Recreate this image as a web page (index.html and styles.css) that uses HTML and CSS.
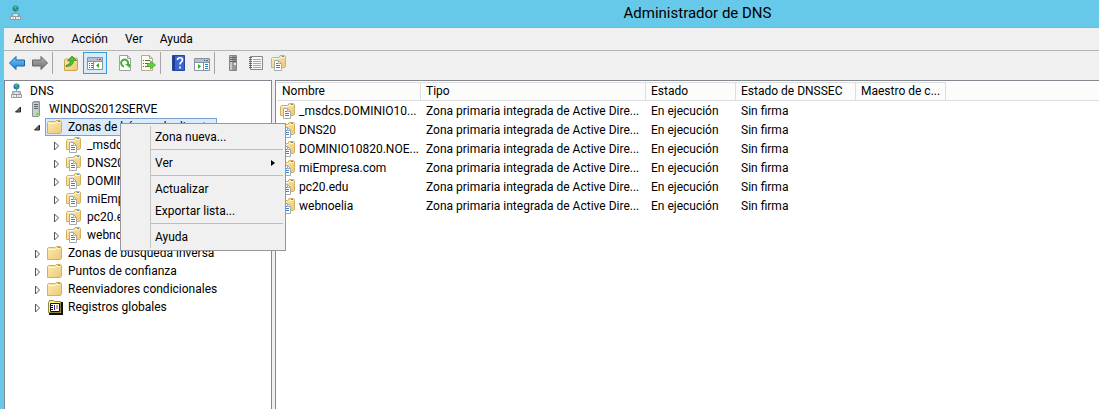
FILE: index.html
```
<!DOCTYPE html>
<html lang="es">
<head>
<meta charset="utf-8">
<title>Administrador de DNS</title>
<link rel="stylesheet" href="styles.css">
</head>
<body>
<svg class="sprite" aria-hidden="true">
  <defs>
    <linearGradient id="gold" x1="0" y1="0" x2="1" y2="1"><stop offset="0" stop-color="#fdecb4"/><stop offset="1" stop-color="#ecc873"/></linearGradient>
    <linearGradient id="blue" x1="0" y1="0" x2="0" y2="1"><stop offset="0" stop-color="#7cc8fa"/><stop offset="1" stop-color="#1580d8"/></linearGradient>
    <linearGradient id="gray" x1="0" y1="0" x2="0" y2="1"><stop offset="0" stop-color="#b5b5b5"/><stop offset="1" stop-color="#6d6d6d"/></linearGradient>
  </defs>
  <symbol id="dns" viewBox="0 0 16 16">
    <path d="M7.500 5v4M3.500 11V8.500h8V11" fill="none" stroke="#9aa0a5"/>
    <circle cx="7.500" cy="3.500" r="3" fill="#2476b8"/>
    <path d="M5.500 2l2-1.500 2 1-1.500 2-2 .5zM7 4.500l2.500-.5-1 2z" fill="#4bbb5c"/>
    <path d="M5 8.500h5v3H5zM2.500 11.500h5v3h-5zM7.500 11.500h5v3h-5z" fill="#f7f7f7" stroke="#959a9f"/>
    <path d="M6.500 10h2M4 13h2M9 13h2" stroke="#b9bdc0"/>
  </symbol>
  <symbol id="server" viewBox="0 0 16 16">
    <path d="M4.500 1.500l1-1h6v14l-1 1h-6z" fill="#a9b0b4" stroke="#8d9498"/>
    <path d="M5 2h5.500v13H5z" fill="#c9ced0"/>
    <path d="M6 3.500h4M6 5.500h4M6 7.500h4" stroke="#596267"/>
    <path d="M8 12h2.500v2H8z" fill="#78e01e"/>
  </symbol>
  <symbol id="folder" viewBox="0 0 16 16">
    <path d="M.5 3.500l1-1H8l1-1h4.500l1 1v11l-1 1h-13z" fill="url(#gold)" stroke="#d5b05f"/>
    <path d="M1.500 4.500h7l1-1h4" fill="none" stroke="#fff7d6"/>
    <path d="M11 2.500h2" stroke="#4a91c4"/>
  </symbol>
  <symbol id="zone" viewBox="0 0 16 16">
    <path d="M.5 3.500l1-1H8l1-2h4.500l1 1v10l-1 1h-13z" fill="url(#gold)" stroke="#d5b05f"/>
    <path d="M1.500 3.500h7l1-1h4" fill="none" stroke="#fff7d6"/>
    <path d="M11 1.500h2" stroke="#4a91c4"/>
    <path d="M3.500 5.500h4l3 3v7h-7z" fill="#fff" stroke="#a7aaad"/>
    <path d="M7.500 5.500v3h3" fill="none" stroke="#a7aaad"/>
    <path d="M5 8.500h2M5 10.500h4M5 12.500h4" stroke="#3c83c6"/>
  </symbol>
  <symbol id="log" viewBox="0 0 16 16">
    <path d="M1.500 3.500l1-2h4l1 1h6v11h-12z" fill="#fff36b" stroke="#8c883c"/>
    <path d="M15 3v12H2" fill="none" stroke="#111" stroke-width="2"/>
    <path d="M3.500 4.500h9v8h-9z" fill="#fff" stroke="#111"/>
    <path d="M4 6.500h2M4 8.500h2M4 10.500h2" stroke="#111"/>
    <path d="M7.500 6v5" stroke="#2430c8"/><path d="M10 6v4" stroke="#dd2020"/>
  </symbol>
  <symbol id="open" viewBox="0 0 16 16"><path d="M10.500 6v5H5.500z" fill="#666" stroke="#262626"/></symbol>
  <symbol id="closed" viewBox="0 0 16 16"><path d="M6.500 5v8l4-4z" fill="#fff" stroke="#555"/></symbol>
  <symbol id="back" viewBox="0 0 16 16"><path d="M.5 8L7 1.500V5h8.500v6H7v3.500z" fill="url(#blue)" stroke="#1d659f"/></symbol>
  <symbol id="forward" viewBox="0 0 16 16"><path d="M15.500 8L9 1.500V5H.5v6H9v3.500z" fill="url(#gray)" stroke="#666"/></symbol>
  <symbol id="up" viewBox="0 0 16 16">
    <path d="M1.500 5l1-1h5l1-1h5l1 1v10l-1 1.500h-12z" fill="url(#gold)" stroke="#cda54c"/>
    <path d="M3 10.500c3-1 4-2 4.500-4.500H4.500L9 1l4.500 4.500h-3c0 3-2 6-7.500 6z" fill="#52be2e" stroke="#278319" stroke-width=".7"/>
  </symbol>
  <symbol id="console" viewBox="0 0 16 16">
    <path d="M.5 2.500h15v12H.5z" fill="#fff" stroke="#8593a3"/><path d="M1 3h14v3H1z" fill="#b5c0cd"/>
    <path d="M1 6.500h14M6.500 7v7" stroke="#8593a3"/><path d="M10 4.500h1M12 4.500h2" stroke="#4d6780"/>
    <path d="M2 8.500h1M4 8.500h2M2 10.500h1M4 10.500h2M2 12.500h1M4 12.500h2" stroke="#2b7ac0"/>
    <path d="M12 8v5l-3-2.500z" fill="#35ad25"/>
  </symbol>
  <symbol id="refresh" viewBox="0 0 16 16">
    <path d="M2.500.5h8l3 3v12h-11z" fill="#fff" stroke="#a0a0a0"/><path d="M10.500.5v3h3" fill="none" stroke="#a0a0a0"/>
    <path d="M7 11.500A3.500 3.500 0 1 1 11 9" fill="none" stroke="#3cb22b" stroke-width="2"/><path d="M8 9h5v4z" fill="#3cb22b"/>
  </symbol>
  <symbol id="export" viewBox="0 0 16 16">
    <path d="M1.500.5h8l3 3v12h-11z" fill="#fffbe8" stroke="#b3ad93"/><path d="M9.500.5v3h3" fill="none" stroke="#b3ad93"/>
    <path d="M3 5.500h1M5 5.500h5M3 8.500h1M5 8.500h4M3 11.500h1M5 11.500h4" stroke="#555d78"/>
    <path d="M7.500 8.500h3V6l5 4-5 4v-2.500h-3z" fill="#5ed137" stroke="#39a51f" stroke-width=".7"/>
  </symbol>
  <symbol id="help" viewBox="0 0 16 16">
    <path d="M1.500.5h12v15h-12z" fill="#3a66d0" stroke="#24479c"/><path d="M3 1v14" stroke="#1e3c91" stroke-width="2"/>
    <path d="M6.500 5c0-3 5-3 5 0 0 2-2.500 2-2.500 4.500M9 11.500v2" fill="none" stroke="#fff" stroke-width="1.700"/>
  </symbol>
  <symbol id="action" viewBox="0 0 16 16">
    <path d="M.5 3.500h15v12H.5z" fill="#fff" stroke="#8593a3"/><path d="M1 4h14v3H1z" fill="#b5c0cd"/>
    <path d="M1 7.500h14M9.500 8v7" stroke="#8593a3"/><path d="M10 5.500h1M12 5.500h2" stroke="#4d6780"/>
    <path d="M11 9.500h3M11 11.500h3M11 13.500h3" stroke="#2b7ac0"/><path d="M4 9v5l3-2.500z" fill="#35ad25"/>
  </symbol>
  <symbol id="tower" viewBox="0 0 16 16">
    <path d="M4.500.5h7v15h-7z" fill="#999" stroke="#858585"/><path d="M5 1h2v14H5z" fill="#c7c7c7"/>
    <path d="M5 2.500h6M5 4.500h6M5 6.500h6" stroke="#626262"/><path d="M9 8h2v2H9z" fill="#eee"/>
  </symbol>
  <symbol id="book" viewBox="0 0 16 16">
    <path d="M2.500 1.500h12v13h-12z" fill="#f7f7f7" stroke="#888"/><path d="M5 4.500h8M5 6.500h8M5 8.500h8M5 10.500h8M5 12.500h8" stroke="#aaa"/>
    <path d="M1 2.500h3M1 4.500h3M1 6.500h3M1 8.500h3M1 10.500h3M1 12.500h3" stroke="#666"/>
  </symbol>
</svg>

<div class="window">
  <header class="titlebar">
    <svg class="icon"><use href="#dns"/></svg>
    <h1 class="title">Administrador de DNS</h1>
  </header>
  <nav class="menubar">
    <button>Archivo</button><button>Acción</button><button>Ver</button><button>Ayuda</button>
  </nav>
  <div class="toolbar" role="toolbar">
    <button aria-label="Atrás"><svg class="icon"><use href="#back"/></svg></button>
    <button aria-label="Adelante"><svg class="icon"><use href="#forward"/></svg></button>
    <span class="divider"></span>
    <button class="first" aria-label="Subir"><svg class="icon"><use href="#up"/></svg></button>
    <button class="active" aria-label="Árbol de consola"><svg class="icon"><use href="#console"/></svg></button>
    <button class="first" aria-label="Actualizar"><svg class="icon"><use href="#refresh"/></svg></button>
    <button aria-label="Exportar lista"><svg class="icon"><use href="#export"/></svg></button>
    <span class="divider"></span>
    <button class="first" aria-label="Ayuda"><svg class="icon"><use href="#help"/></svg></button>
    <button aria-label="Panel de acciones"><svg class="icon"><use href="#action"/></svg></button>
    <span class="divider"></span>
    <button class="first" aria-label="Servidor"><svg class="icon"><use href="#tower"/></svg></button>
    <button aria-label="Registros"><svg class="icon"><use href="#book"/></svg></button>
    <button aria-label="Zona"><svg class="icon"><use href="#zone"/></svg></button>
  </div>
  <main class="panes">
    <section class="tree-pane">
      <ul class="tree">
        <li><div class="node"><span class="label"><svg class="icon"><use href="#dns"/></svg>DNS</span></div>
          <ul class="servers">
            <li><div class="node"><svg class="icon"><use href="#open"/></svg><span class="label"><svg class="icon"><use href="#server"/></svg>WINDOS2012SERVE</span></div>
              <ul>
                <li><div class="node"><svg class="icon"><use href="#open"/></svg><span class="label selected"><svg class="icon"><use href="#folder"/></svg>Zonas de búsqueda directa</span></div>
                  <ul>
                    <li><div class="node"><svg class="icon"><use href="#closed"/></svg><span class="label"><svg class="icon"><use href="#zone"/></svg>_msdcs</span></div></li>
                    <li><div class="node"><svg class="icon"><use href="#closed"/></svg><span class="label"><svg class="icon"><use href="#zone"/></svg>DNS20</span></div></li>
                    <li><div class="node"><svg class="icon"><use href="#closed"/></svg><span class="label"><svg class="icon"><use href="#zone"/></svg>DOMINIO</span></div></li>
                    <li><div class="node"><svg class="icon"><use href="#closed"/></svg><span class="label"><svg class="icon"><use href="#zone"/></svg>miEmpresa</span></div></li>
                    <li><div class="node"><svg class="icon"><use href="#closed"/></svg><span class="label"><svg class="icon"><use href="#zone"/></svg>pc20.edu</span></div></li>
                    <li><div class="node"><svg class="icon"><use href="#closed"/></svg><span class="label"><svg class="icon"><use href="#zone"/></svg>webnoelia</span></div></li>
                  </ul>
                </li>
                <li><div class="node"><svg class="icon"><use href="#closed"/></svg><span class="label"><svg class="icon"><use href="#folder"/></svg>Zonas de búsqueda inversa</span></div></li>
                <li><div class="node"><svg class="icon"><use href="#closed"/></svg><span class="label"><svg class="icon"><use href="#folder"/></svg>Puntos de confianza</span></div></li>
                <li><div class="node"><svg class="icon"><use href="#closed"/></svg><span class="label"><svg class="icon"><use href="#folder"/></svg>Reenviadores condicionales</span></div></li>
                <li><div class="node"><svg class="icon"><use href="#closed"/></svg><span class="label"><svg class="icon"><use href="#log"/></svg>Registros globales</span></div></li>
              </ul>
            </li>
          </ul>
        </li>
      </ul>
      <div class="context-menu" role="menu">
        <button role="menuitem">Zona nueva...</button>
        <hr>
        <button role="menuitem">Ver<svg class="arrow" viewBox="0 0 4 6"><path d="M0 0v6l4-3z"/></svg></button>
        <hr>
        <button role="menuitem">Actualizar</button>
        <button role="menuitem">Exportar lista...</button>
        <hr>
        <button role="menuitem">Ayuda</button>
      </div>
    </section>
    <section class="list-pane">
      <table class="list">
        <colgroup><col class="name"><col class="type"><col class="state"><col class="dnssec"><col class="master"><col></colgroup>
        <thead><tr><th>Nombre</th><th>Tipo</th><th>Estado</th><th>Estado de DNSSEC</th><th>Maestro de c...</th><th></th></tr></thead>
        <tbody>
          <tr><td><span class="cell"><svg class="icon"><use href="#zone"/></svg>_msdcs.DOMINIO10...</span></td><td>Zona primaria integrada de Active Dire...</td><td>En ejecución</td><td>Sin firma</td><td></td><td></td></tr>
          <tr><td><span class="cell"><svg class="icon"><use href="#zone"/></svg>DNS20</span></td><td>Zona primaria integrada de Active Dire...</td><td>En ejecución</td><td>Sin firma</td><td></td><td></td></tr>
          <tr><td><span class="cell"><svg class="icon"><use href="#zone"/></svg>DOMINIO10820.NOE...</span></td><td>Zona primaria integrada de Active Dire...</td><td>En ejecución</td><td>Sin firma</td><td></td><td></td></tr>
          <tr><td><span class="cell"><svg class="icon"><use href="#zone"/></svg>miEmpresa.com</span></td><td>Zona primaria integrada de Active Dire...</td><td>En ejecución</td><td>Sin firma</td><td></td><td></td></tr>
          <tr><td><span class="cell"><svg class="icon"><use href="#zone"/></svg>pc20.edu</span></td><td>Zona primaria integrada de Active Dire...</td><td>En ejecución</td><td>Sin firma</td><td></td><td></td></tr>
          <tr><td><span class="cell"><svg class="icon"><use href="#zone"/></svg>webnoelia</span></td><td>Zona primaria integrada de Active Dire...</td><td>En ejecución</td><td>Sin firma</td><td></td><td></td></tr>
        </tbody>
      </table>
    </section>
  </main>
</div>
</body>
</html>
```
FILE: styles.css
```
* { box-sizing: border-box; }
body { margin: 0; font: 12px/18px Roboto, "Open Sans", sans-serif; color: #000; }
button { border: 0; padding: 0; background: none; font: inherit; color: inherit; }
ul { list-style: none; margin: 0; padding: 0; }
.sprite { position: absolute; width: 0; height: 0; }
.icon { width: 16px; height: 16px; flex: none; display: block; }

.window { display: flex; flex-direction: column; min-height: 100vh; padding-left: 4px; background: #67c9e9; }
.titlebar { display: flex; align-items: center; height: 28px; padding: 0 4px 2px; border-bottom: 1px solid #7fb4c8; }
.title { flex: 1; margin: 0; padding-left: 276px; text-align: center; font-size: 15px; font-weight: 400; line-height: 24px; }
.menubar { display: flex; gap: 17px; height: 23px; padding: 0 10px; background: #f0f0f0; border-bottom: 1px solid #b4b4b4; }
.toolbar { display: flex; align-items: center; gap: 7px; height: 29px; padding: 0 5px 5px; background: #f0f0f0; }
.divider { width: 1px; height: 22px; margin-left: -3px; background: #a5a5a5; }
.first { margin-left: 3px; }
.active { display: grid; place-items: center; width: 24px; height: 22px; margin-left: -3px; background: #d9ebf9; border: 1px solid #3a9bdc; }

.panes { flex: 1; display: grid; grid-template-columns: 268px 1fr; gap: 3px; background: #f0eef3; }
.tree-pane { position: relative; background: #fff; border: 1px solid #828790; border-bottom: 0; white-space: nowrap; }
.tree { padding: 1px 0 0 4px; }
.servers { margin-left: 1px; }
.servers ul { margin-left: 19px; }
.node { display: flex; align-items: center; height: 18px; }
.label { display: flex; align-items: center; gap: 5px; height: 18px; padding-left: 2px; }
.tree > li > .node > .label { padding-left: 0; }
.selected { background: #dcebfc; box-shadow: inset 0 0 0 1px #7da2ce; padding-right: 4px; }

.context-menu { position: absolute; left: 115px; top: 42px; width: 166px; padding: 2px; border: 1px solid #979797; background: linear-gradient(#c4c4c4, #c4c4c4) 29px 2px / 1px calc(100% - 4px) no-repeat #f0f0f0; }
.context-menu button { display: flex; align-items: center; justify-content: space-between; width: 100%; height: 22px; padding: 0 8px 0 32px; }
.context-menu hr { height: 1px; margin: 1px 0 2px 28px; border: 0; background: #bdbdbd; }
.arrow { width: 4px; height: 6px; }

.list-pane { background: #fff; border: solid #828790; border-width: 1px 0 0 1px; padding: 1px 0 0 1px; }
.list { width: 100%; table-layout: fixed; border-collapse: separate; border-spacing: 0; white-space: nowrap; }
.name { width: 144px; }
.type { width: 225px; }
.state { width: 90px; }
.dnssec { width: 120px; }
.master { width: 90px; }
.list th { height: 19px; padding: 0 5px; text-align: left; font-weight: 400; line-height: 17px; background: #fcfcfc; border: solid #dedede; border-width: 1px 1px 1px 0; }
.list th:last-child { border-width: 0 0 1px; }
.list td { height: 19px; padding: 0 5px; }
.list td:first-child { padding: 0 0 0 3px; }
.cell { display: flex; align-items: center; gap: 3px; }
```
